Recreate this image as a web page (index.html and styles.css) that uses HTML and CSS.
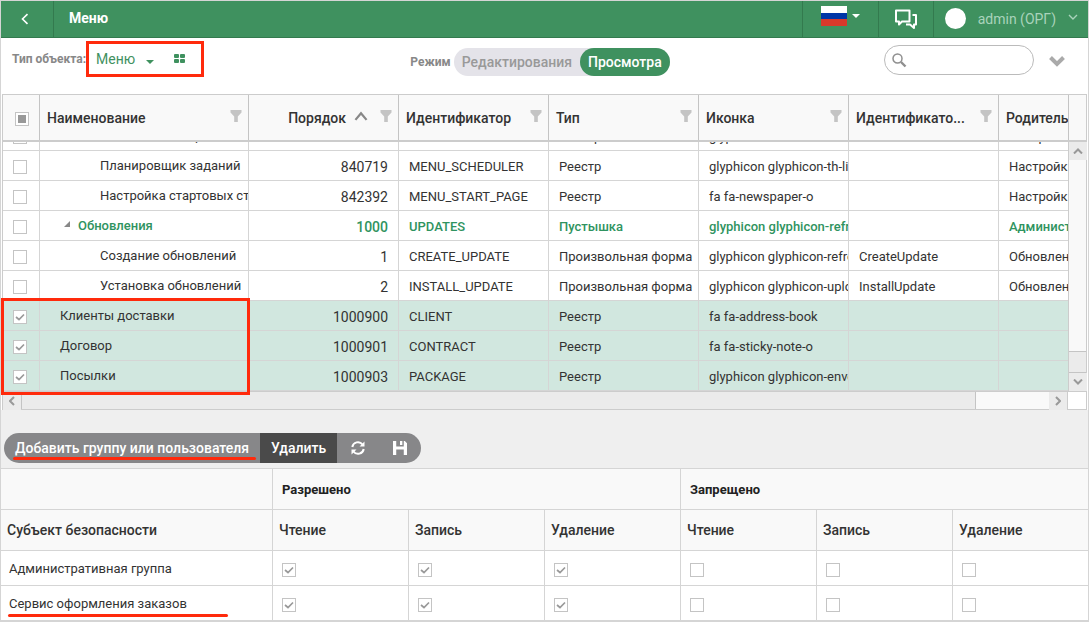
FILE: index.html
```html
<!DOCTYPE html>
<html lang="ru">
<head>
    <meta charset="UTF-8">
    <meta name="viewport" content="width=device-width, initial-scale=1.0">
    <title>Меню</title>
    <link rel="stylesheet" href="styles.css">
</head>
<body>
    <svg class="sprite" aria-hidden="true">
        <symbol id="icon-filter" viewBox="0 0 12 12"><path d="M0.5 0h11v2.5L7.8 6.5V12H4.2V6.5L0.5 2.5z" fill="currentColor"/></symbol>
    </svg>
    <div class="page">
        <header class="topbar">
            <button type="button" class="topbar-item back" aria-label="Назад">
                <svg width="8" height="12" viewBox="0 0 8 12"><path d="M6.5 1.2L1.5 6l5 4.8" fill="none" stroke="#fff" stroke-width="1.6"/></svg>
            </button>
            <h1>Меню</h1>
            <button type="button" class="topbar-item lang" aria-label="Язык">
                <svg width="26" height="20" viewBox="0 0 26 20"><path d="M0 0h26v7H0z" fill="#fff"/><path d="M0 7h26v6H0z" fill="#0036a7"/><path d="M0 13h26v7H0z" fill="#d8392b"/></svg>
                <svg width="8" height="4" viewBox="0 0 8 4"><path d="M0 0h8L4 4z" fill="#fff"/></svg>
            </button>
            <button type="button" class="topbar-item chat" aria-label="Сообщения">
                <svg width="24" height="20" viewBox="0 0 24 20" fill="none" stroke="#fff" stroke-width="2" stroke-linejoin="round"><path d="M2 1.500h13.500v11H8l-3 3v-3H2z"/><path d="M18.500 6H22v9.500h-2V19l-4-3.500h-4"/></svg>
            </button>
            <button type="button" class="topbar-item user">
                <span class="avatar"></span>
                <span>admin (ОРГ)</span>
                <svg width="10" height="6" viewBox="0 0 10 6"><path d="M1 1l4 4 4-4" fill="none" stroke="#a9d3bb" stroke-width="1.4"/></svg>
            </button>
        </header>

        <div class="toolbar">
            <label class="caption" for="object-type">Тип объекта:</label>
            <div class="type-box">
                <select id="object-type">
                    <option>Меню</option>
                </select>
                <button type="button" class="plain" aria-label="Плитка">
                    <svg width="11" height="9" viewBox="0 0 11 9" fill="#3f915f"><rect width="5" height="4" rx="1"/><rect x="6" width="5" height="4" rx="1"/><rect y="5" width="5" height="4" rx="1"/><rect x="6" y="5" width="5" height="4" rx="1"/></svg>
                </button>
            </div>
            <div class="mode">
                <span class="caption">Режим</span>
                <div class="switch">
                    <button type="button">Редактирования</button>
                    <button type="button" class="active">Просмотра</button>
                </div>
            </div>
            <div class="search">
                <svg width="15" height="15" viewBox="0 0 15 15" fill="none" stroke="#8f8f8f"><circle cx="5.500" cy="5.500" r="4.500" stroke-width="1.500"/><path d="M9 9l4.500 4.500" stroke-width="2.400"/></svg>
                <input type="search" aria-label="Поиск">
            </div>
            <button type="button" class="plain expand" aria-label="Развернуть">
                <svg width="16" height="12" viewBox="0 0 16 12"><path d="M1.500 2.500L8 9l6.500-6.500" fill="none" stroke="#aaa" stroke-width="4"/></svg>
            </button>
        </div>

        <section class="grid">
            <div class="grid-head">
                <div class="clip">
                    <table>
                        <colgroup><col class="col-check"><col class="col-name"><col class="col" span="6"></colgroup>
                        <thead>
                            <tr>
                                <th class="check"><input type="checkbox" class="partial" aria-label="Выбрать все"></th>
                                <th><div class="th">Наименование <svg class="filter"><use href="#icon-filter"/></svg></div></th>
                                <th><div class="th num">Порядок <svg class="sort" viewBox="0 0 12 9"><path d="M1 8l5-6 5 6" fill="none" stroke="#888" stroke-width="2"/></svg><svg class="filter"><use href="#icon-filter"/></svg></div></th>
                                <th><div class="th">Идентификатор <svg class="filter"><use href="#icon-filter"/></svg></div></th>
                                <th><div class="th">Тип <svg class="filter"><use href="#icon-filter"/></svg></div></th>
                                <th><div class="th">Иконка <svg class="filter"><use href="#icon-filter"/></svg></div></th>
                                <th><div class="th">Идентификато... <svg class="filter"><use href="#icon-filter"/></svg></div></th>
                                <th><div class="th">Родитель</div></th>
                            </tr>
                        </thead>
                    </table>
                </div>
                <div class="head-gap"></div>
            </div>
            <div class="grid-body">
                <div class="clip">
                    <table class="rows">
                        <colgroup><col class="col-check"><col class="col-name"><col class="col" span="6"></colgroup>
                        <tbody>
                            <tr><td class="check"><input type="checkbox" aria-label="Меню навигатора"></td><td class="level-3">Меню навигатора</td><td class="num">840718</td><td>MENU_NAV</td><td>Реестр</td><td>glyphicon</td><td></td><td>Настройки</td></tr>
                            <tr><td class="check"><input type="checkbox" aria-label="Планировщик заданий"></td><td class="level-3">Планировщик заданий</td><td class="num">840719</td><td>MENU_SCHEDULER</td><td>Реестр</td><td>glyphicon glyphicon-th-list</td><td></td><td>Настройки</td></tr>
                            <tr><td class="check"><input type="checkbox" aria-label="Настройка стартовых страниц"></td><td class="level-3">Настройка стартовых страниц</td><td class="num">842392</td><td>MENU_START_PAGE</td><td>Реестр</td><td>fa fa-newspaper-o</td><td></td><td>Настройки</td></tr>
                            <tr class="group"><td class="check"><input type="checkbox" aria-label="Обновления"></td><td class="level-2"><svg class="twisty" viewBox="0 0 6 6"><path d="M6 0v6H0z" fill="#888"/></svg>Обновления</td><td class="num">1000</td><td>UPDATES</td><td>Пустышка</td><td>glyphicon glyphicon-refresh</td><td></td><td>Администрирование</td></tr>
                            <tr><td class="check"><input type="checkbox" aria-label="Создание обновлений"></td><td class="level-3">Создание обновлений</td><td class="num">1</td><td>CREATE_UPDATE</td><td>Произвольная форма</td><td>glyphicon glyphicon-refresh</td><td>CreateUpdate</td><td>Обновления</td></tr>
                            <tr><td class="check"><input type="checkbox" aria-label="Установка обновлений"></td><td class="level-3">Установка обновлений</td><td class="num">2</td><td>INSTALL_UPDATE</td><td>Произвольная форма</td><td>glyphicon glyphicon-upload</td><td>InstallUpdate</td><td>Обновления</td></tr>
                            <tr class="selected"><td class="check"><input type="checkbox" checked aria-label="Клиенты доставки"></td><td class="level-1">Клиенты доставки</td><td class="num">1000900</td><td>CLIENT</td><td>Реестр</td><td>fa fa-address-book</td><td></td><td></td></tr>
                            <tr class="selected"><td class="check"><input type="checkbox" checked aria-label="Договор"></td><td class="level-1">Договор</td><td class="num">1000901</td><td>CONTRACT</td><td>Реестр</td><td>fa fa-sticky-note-o</td><td></td><td></td></tr>
                            <tr class="selected"><td class="check"><input type="checkbox" checked aria-label="Посылки"></td><td class="level-1">Посылки</td><td class="num">1000903</td><td>PACKAGE</td><td>Реестр</td><td>glyphicon glyphicon-envelope</td><td></td><td></td></tr>
                        </tbody>
                    </table>
                </div>
                <div class="vscroll">
                    <button type="button" aria-label="Вверх"><svg width="10" height="6" viewBox="0 0 10 6"><path d="M1 5.500l4-4 4 4"/></svg></button>
                    <div class="track"></div>
                    <div class="thumb"></div>
                    <button type="button" aria-label="Вниз"><svg width="10" height="6" viewBox="0 0 10 6"><path d="M1 0.500l4 4 4-4"/></svg></button>
                </div>
            </div>
            <div class="hscroll">
                <button type="button" aria-label="Влево"><svg width="6" height="10" viewBox="0 0 6 10"><path d="M5 1L1 5l4 4"/></svg></button>
                <div class="thumb"></div>
                <div class="track"></div>
                <button type="button" aria-label="Вправо"><svg width="6" height="10" viewBox="0 0 6 10"><path d="M1 1l4 4-4 4"/></svg></button>
                <div class="corner"></div>
            </div>
            <div class="mark-rows"></div>
        </section>

        <div class="actions">
            <div class="pill">
                <button type="button" class="add">Добавить группу или пользователя</button>
                <button type="button" class="delete">Удалить</button>
                <button type="button" class="icon" aria-label="Обновить">
                    <svg width="14" height="14" viewBox="0 0 14 14" fill="none" stroke="#fff" stroke-width="2"><path d="M1.300 6A5.700 5.700 0 0 1 11.500 3.500M12.700 8A5.700 5.700 0 0 1 2.500 10.500"/><path d="M13.500 0.500v5h-5zM0.500 13.500v-5h5z" fill="#fff" stroke="none"/></svg>
                </button>
                <button type="button" class="icon" aria-label="Сохранить">
                    <svg width="14" height="14" viewBox="0 0 13 13"><path d="M0 0h3v5h7V0h1l2 2v11h-3V8H3v5H0z" fill="#fff"/><path d="M6.500 0h2.200v3.800H6.500z" fill="#fff"/></svg>
                </button>
            </div>
        </div>

        <table class="rights">
            <colgroup><col class="col-subject"><col class="col-right" span="5"><col></colgroup>
            <thead>
                <tr class="groups"><th></th><th colspan="3">Разрешено</th><th colspan="3">Запрещено</th></tr>
                <tr><th>Субъект безопасности</th><th>Чтение</th><th>Запись</th><th>Удаление</th><th>Чтение</th><th>Запись</th><th>Удаление</th></tr>
            </thead>
            <tbody>
                <tr>
                    <td>Административная группа</td>
                    <td><input type="checkbox" checked aria-label="Разрешить чтение"></td>
                    <td><input type="checkbox" checked aria-label="Разрешить запись"></td>
                    <td><input type="checkbox" checked aria-label="Разрешить удаление"></td>
                    <td><input type="checkbox" aria-label="Запретить чтение"></td>
                    <td><input type="checkbox" aria-label="Запретить запись"></td>
                    <td><input type="checkbox" aria-label="Запретить удаление"></td>
                </tr>
                <tr>
                    <td class="underlined">Сервис оформления заказов</td>
                    <td><input type="checkbox" checked aria-label="Разрешить чтение"></td>
                    <td><input type="checkbox" checked aria-label="Разрешить запись"></td>
                    <td><input type="checkbox" checked aria-label="Разрешить удаление"></td>
                    <td><input type="checkbox" aria-label="Запретить чтение"></td>
                    <td><input type="checkbox" aria-label="Запретить запись"></td>
                    <td><input type="checkbox" aria-label="Запретить удаление"></td>
                </tr>
            </tbody>
        </table>
    </div>
</body>
</html>
```
FILE: styles.css
```css
* {
    box-sizing: border-box;
}
body {
    margin: 0;
    background: #efefef;
    color: #333;
    font-family: Roboto, "Noto Sans", sans-serif;
    font-size: 13px;
}
button, input, select {
    font: inherit;
    color: inherit;
    margin: 0;
}
button {
    padding: 0;
    border: none;
    background: none;
    cursor: pointer;
}
.sprite {
    display: none;
}
.page {
    border: 1px solid #d5d5d5;
}

/* Top bar */
.topbar {
    display: flex;
    align-items: stretch;
    height: 37px;
    background: #3f915f;
    border-bottom: 1px solid #337a4e;
    color: #fff;
}
.topbar h1 {
    flex: 1;
    margin: 0;
    padding-left: 15px;
    font-size: 14px;
    font-weight: 700;
    line-height: 35px;
}
.topbar-item {
    display: flex;
    align-items: center;
    justify-content: center;
    border-left: 1px solid #337a4e;
}
.back {
    width: 53px;
    padding-right: 4px;
    border-left: none;
    border-right: 1px solid #337a4e;
}
.lang {
    width: 76px;
    gap: 5px;
    padding-bottom: 6px;
}
.chat {
    width: 55px;
}
.user {
    gap: 12px;
    padding: 0 10px 0 11px;
    color: #a9d3bb;
    font-size: 14px;
}
.user svg {
    margin-bottom: 4px;
}
.avatar {
    width: 21px;
    height: 21px;
    margin-bottom: 2px;
    border-radius: 50%;
    background: #fff;
}

/* Object type, mode, search */
.toolbar {
    display: flex;
    align-items: center;
    height: 56px;
    padding: 0 23px 15px 11px;
    background: #fff;
}
.caption {
    color: #888;
    font-size: 12px;
    font-weight: 700;
    white-space: nowrap;
}
.type-box {
    display: flex;
    align-items: center;
    gap: 20px;
    width: 118px;
    height: 36px;
    padding-left: 7px;
    border: 3px solid #ff2a0c;
}
.type-box select {
    width: 58px;
    padding: 0;
    border: none;
    appearance: none;
    background: url("data:image/svg+xml,%3Csvg xmlns='http://www.w3.org/2000/svg' width='8' height='4'%3E%3Cpath d='M0 0h8L4 4z' fill='%233f915f'/%3E%3C/svg%3E") no-repeat right 75%;
    color: #3f915f;
    font-size: 14px;
}
.plain {
    display: flex;
}
.mode {
    display: flex;
    flex: 1;
    align-items: center;
    justify-content: center;
    gap: 3px;
    padding: 7px 8px 0 0;
}
.switch {
    display: flex;
    border-radius: 14px;
    background: #e4e3e9;
    color: #999;
    font-size: 14px;
    font-weight: 500;
}
.switch button {
    height: 28px;
    padding: 0 8px;
}
.switch .active {
    border-radius: 14px;
    background: #3f915f;
    color: #fff;
}
.search {
    display: flex;
    align-items: center;
    width: 150px;
    height: 30px;
    margin: 3px 15px 0 0;
    padding: 0 7px;
    border: 1px solid #bbb;
    border-radius: 15px;
}
.search input {
    flex: 1;
    min-width: 0;
    border: none;
    outline: none;
    background: none;
}
.expand {
    margin-top: 5px;
}

/* Tables */
table {
    border-collapse: separate;
    border-spacing: 0;
    table-layout: fixed;
}
th, td {
    padding: 0;
    border-right: 1px solid #d5d5d5;
    border-bottom: 1px solid #d5d5d5;
    text-align: left;
    overflow: hidden;
    white-space: nowrap;
}
th {
    background: #f9f9f9;
    font-size: 14px;
    font-weight: 500;
}
input[type="checkbox"] {
    display: block;
    width: 14px;
    height: 14px;
    border: 1px solid #c4c4c4;
    appearance: none;
    background: #fff center no-repeat;
}
input[type="checkbox"]:checked {
    background-image: url("data:image/svg+xml,%3Csvg xmlns='http://www.w3.org/2000/svg' width='10' height='8'%3E%3Cpath d='M1 4l3 2.500 5-5' fill='none' stroke='%23999' stroke-width='1.700'/%3E%3C/svg%3E");
}
input[type="checkbox"].partial {
    background-image: linear-gradient(#999, #999);
    background-size: 8px 8px;
}

/* Menu grid */
.grid {
    position: relative;
    padding: 0 1px;
    background: #fff;
}
.grid-head, .grid-body {
    display: flex;
    border-left: 1px solid #ccc;
    border-right: 1px solid #ccc;
}
.grid-head {
    border-top: 1px solid #ccc;
    border-bottom: 2px solid #ccc;
    background: #f9f9f9;
}
.clip {
    flex: 1;
    min-width: 0;
    overflow: hidden;
}
.clip table {
    width: 1145px;
}
.col-check {
    width: 37px;
}
.col-name {
    width: 209px;
}
.col {
    width: 150px;
}
.grid-head th {
    height: 45px;
    border-bottom: none;
    border-color: #c4c4c4;
}
.th {
    display: flex;
    align-items: center;
    padding: 0 6px 0 7px;
}
.filter {
    width: 12px;
    height: 12px;
    margin: 0 0 4px auto;
    color: #c4c4c4;
}
.th.num {
    justify-content: flex-end;
}
.sort {
    width: 14px;
    height: 10px;
    margin: 0 12px 4px 8px;
}
.num .filter {
    margin-left: 0;
}
.grid-head .check input {
    margin: 2px 0 0 12px;
}
.head-gap {
    width: 18px;
    border-left: 1px solid #c4c4c4;
}
.rows {
    margin-top: -21px; /* scrolled part way through a row */
}
.rows td {
    height: 30px;
    padding: 2px 10px 0;
    text-overflow: clip;
}
.rows .check input {
    margin-top: 1px;
}
.rows .level-1, .rows .level-2, .rows .level-3 {
    padding: 0 0 0 20px;
}
.rows .level-2 {
    padding-left: 24px;
}
.rows .level-3 {
    padding-left: 60px;
}
.rows .num {
    font-size: 14px;
    text-align: right;
}
.twisty {
    width: 6px;
    height: 6px;
    margin: 0 8px 3px 0;
}
.group {
    color: #2f9360;
    font-weight: 500;
}
.selected td {
    background: #d1e7df;
}

/* Scroll bars */
.vscroll, .hscroll {
    display: flex;
}
.vscroll {
    flex-direction: column;
    width: 18px;
    border-left: 1px solid #ccc;
    background: #f9f9f9;
}
.vscroll button, .hscroll button {
    display: flex;
    align-items: center;
    justify-content: center;
    width: 18px;
    height: 18px;
    background: #ebebeb;
}
.vscroll path, .hscroll path {
    fill: none;
    stroke: #999;
    stroke-width: 2;
}
.vscroll .track {
    flex: 1;
}
.vscroll .thumb {
    height: 22px;
    border-top: 1px solid #c4c4c4;
    border-bottom: 1px solid #c4c4c4;
    background: #ebebeb;
}
.hscroll {
    height: 19px;
    border: 1px solid #ccc;
    background: #f9f9f9;
}
.hscroll .thumb {
    flex: 13;
    border: solid #c4c4c4;
    border-width: 0 1px;
    background: #ebebeb;
}
.hscroll .track {
    flex: 1;
}
.hscroll .corner {
    width: 19px;
    border-left: 1px solid #ccc;
    background: #fff;
}
.mark-rows {
    position: absolute;
    left: 0;
    bottom: 15px;
    width: 249px;
    height: 97px;
    border: 3px solid #ff2a0c;
}

/* Access rights */
.actions {
    padding: 23px 3px 5px;
}
.pill {
    display: inline-flex;
    vertical-align: top;
    height: 30px;
    border-radius: 15px;
    background: #878789;
    color: #fff;
    font-size: 14px;
    font-weight: 500;
    overflow: hidden;
}
.pill button {
    padding: 0 11px;
}
.pill .add {
    position: relative;
}
.add::after {
    content: "";
    position: absolute;
    left: 9px;
    right: 4px;
    bottom: 3px;
    height: 3px;
    border-radius: 2px;
    background: #ff2a0c;
}
.pill .delete {
    background: #4a4a4a;
}
.pill .icon {
    display: flex;
    align-items: center;
    padding: 0 14px;
}
.rights {
    width: 100%;
    border-top: 1px solid #d5d5d5;
    background: #fff;
}
.col-subject {
    width: 272px;
}
.col-right {
    width: 136px;
}
.rights th {
    height: 41px;
    padding: 0 6px;
}
.rights .groups th {
    padding: 0 9px;
    color: #222;
    font-size: 13px;
    font-weight: 700;
}
.rights td {
    height: 35px;
    padding: 0 9px;
}
.rights td:first-child {
    padding: 0 8px;
}
.rights td input {
    margin-top: 3px;
}
.rights th:last-child, .rights td:last-child {
    border-right: none;
}
.underlined {
    position: relative;
}
.underlined::after {
    content: "";
    position: absolute;
    left: 7px;
    bottom: 3px;
    width: 220px;
    height: 3px;
    border-radius: 2px;
    background: #ff2a0c;
}
```
